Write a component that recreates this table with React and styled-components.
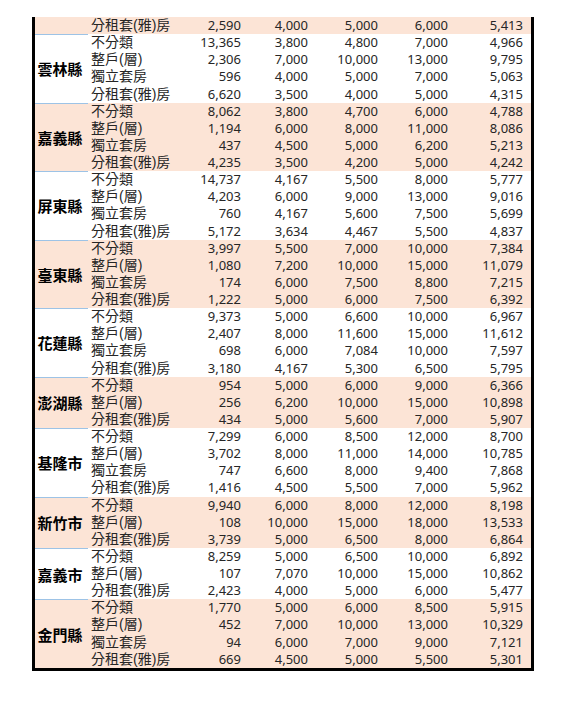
import React from "react";
import styled, { createGlobalStyle } from "styled-components";

const GlobalStyle = createGlobalStyle`
  html, body {
    margin: 0;
    padding: 0;
    background: #ffffff;
  }
  body {
    font-family: "Noto Sans", "Noto Sans CJK TC", sans-serif;
    color: #262626;
  }
`;

const ROW_H = 17.13;

const Page = styled.div`
  padding: 17px 0 40px 32px;
`;

const Table = styled.div`
  width: 502px;
  box-sizing: border-box;
  border-left: 3px solid #000;
  border-right: 3px solid #000;
  border-bottom: 3px solid #000;
`;

const Group = styled.div`
  display: grid;
  grid-template-columns: 53px 87px 66px 67px 70px 70px 75px;
  grid-auto-rows: ${ROW_H}px;
  padding-right: 8px;
  background: ${props => (props.$shade ? "#fce4d6" : "#ffffff")};
`;

const County = styled.div`
  grid-column: 1;
  grid-row: 1 / span ${props => props.$span};
  box-sizing: border-box;
  border-top: ${props => (props.$line ? "1px solid #9dc3e6" : "none")};
  display: flex;
  align-items: center;
  justify-content: center;
  padding-right: 3px;
  font-family: "Noto Sans CJK TC", sans-serif;
  font-weight: 700;
  font-size: 15px;
  color: #000;
`;

const Type = styled.div`
  grid-column: 2;
  padding-left: 3px;
  font-family: "Liberation Sans", "Noto Sans CJK TC", sans-serif;
  font-size: 14px;
  line-height: ${ROW_H}px;
  white-space: nowrap;
`;

const Num = styled.div`
  text-align: right;
  font-size: 13px;
  line-height: ${ROW_H}px;
  white-space: nowrap;
`;

const groups = [
  {
    name: "",
    rows: [["分租套(雅)房", "2,590", "4,000", "5,000", "6,000", "5,413"]]
  },
  {
    name: "雲林縣",
    rows: [
      ["不分類", "13,365", "3,800", "4,800", "7,000", "4,966"],
      ["整戶(層)", "2,306", "7,000", "10,000", "13,000", "9,795"],
      ["獨立套房", "596", "4,000", "5,000", "7,000", "5,063"],
      ["分租套(雅)房", "6,620", "3,500", "4,000", "5,000", "4,315"]
    ]
  },
  {
    name: "嘉義縣",
    rows: [
      ["不分類", "8,062", "3,800", "4,700", "6,000", "4,788"],
      ["整戶(層)", "1,194", "6,000", "8,000", "11,000", "8,086"],
      ["獨立套房", "437", "4,500", "5,000", "6,200", "5,213"],
      ["分租套(雅)房", "4,235", "3,500", "4,200", "5,000", "4,242"]
    ]
  },
  {
    name: "屏東縣",
    rows: [
      ["不分類", "14,737", "4,167", "5,500", "8,000", "5,777"],
      ["整戶(層)", "4,203", "6,000", "9,000", "13,000", "9,016"],
      ["獨立套房", "760", "4,167", "5,600", "7,500", "5,699"],
      ["分租套(雅)房", "5,172", "3,634", "4,467", "5,500", "4,837"]
    ]
  },
  {
    name: "臺東縣",
    rows: [
      ["不分類", "3,997", "5,500", "7,000", "10,000", "7,384"],
      ["整戶(層)", "1,080", "7,200", "10,000", "15,000", "11,079"],
      ["獨立套房", "174", "6,000", "7,500", "8,800", "7,215"],
      ["分租套(雅)房", "1,222", "5,000", "6,000", "7,500", "6,392"]
    ]
  },
  {
    name: "花蓮縣",
    rows: [
      ["不分類", "9,373", "5,000", "6,600", "10,000", "6,967"],
      ["整戶(層)", "2,407", "8,000", "11,600", "15,000", "11,612"],
      ["獨立套房", "698", "6,000", "7,084", "10,000", "7,597"],
      ["分租套(雅)房", "3,180", "4,167", "5,300", "6,500", "5,795"]
    ]
  },
  {
    name: "澎湖縣",
    rows: [
      ["不分類", "954", "5,000", "6,000", "9,000", "6,366"],
      ["整戶(層)", "256", "6,200", "10,000", "15,000", "10,898"],
      ["分租套(雅)房", "434", "5,000", "5,600", "7,000", "5,907"]
    ]
  },
  {
    name: "基隆市",
    rows: [
      ["不分類", "7,299", "6,000", "8,500", "12,000", "8,700"],
      ["整戶(層)", "3,702", "8,000", "11,000", "14,000", "10,785"],
      ["獨立套房", "747", "6,600", "8,000", "9,400", "7,868"],
      ["分租套(雅)房", "1,416", "4,500", "5,500", "7,000", "5,962"]
    ]
  },
  {
    name: "新竹市",
    rows: [
      ["不分類", "9,940", "6,000", "8,000", "12,000", "8,198"],
      ["整戶(層)", "108", "10,000", "15,000", "18,000", "13,533"],
      ["分租套(雅)房", "3,739", "5,000", "6,500", "8,000", "6,864"]
    ]
  },
  {
    name: "嘉義市",
    rows: [
      ["不分類", "8,259", "5,000", "6,500", "10,000", "6,892"],
      ["整戶(層)", "107", "7,070", "10,000", "15,000", "10,862"],
      ["分租套(雅)房", "2,423", "4,000", "5,000", "6,000", "5,477"]
    ]
  },
  {
    name: "金門縣",
    rows: [
      ["不分類", "1,770", "5,000", "6,000", "8,500", "5,915"],
      ["整戶(層)", "452", "7,000", "10,000", "13,000", "10,329"],
      ["獨立套房", "94", "6,000", "7,000", "9,000", "7,121"],
      ["分租套(雅)房", "669", "4,500", "5,000", "5,500", "5,301"]
    ]
  }
];

const App = () => {
  return (
    <Page>
      <GlobalStyle />
      <Table>
        {groups.map((g, gi) => (
          <Group key={gi} $shade={gi % 2 === 0}>
            <County $span={g.rows.length} $line={gi > 0}>
              {g.name}
            </County>
            {g.rows.map(([type, ...nums], ri) => (
              <React.Fragment key={ri}>
                <Type style={{ gridRow: ri + 1 }}>{type}</Type>
                {nums.map((n, ni) => (
                  <Num key={ni} style={{ gridRow: ri + 1 }}>
                    {n}
                  </Num>
                ))}
              </React.Fragment>
            ))}
          </Group>
        ))}
      </Table>
    </Page>
  );
};

export default App;
